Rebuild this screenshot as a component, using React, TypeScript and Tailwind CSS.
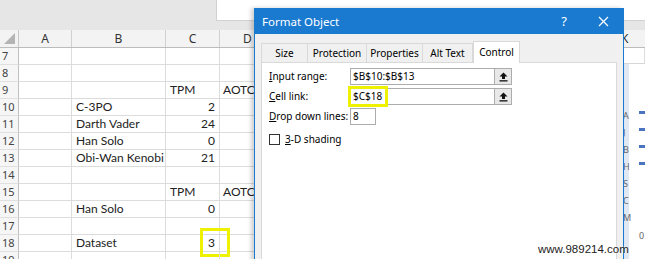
import React from "react";

type Row = { n: number; b?: string; c?: string; d?: string; num?: boolean; mark?: boolean };

const rows: Row[] = [
  { n: 7 },
  { n: 8 },
  { n: 9, c: "TPM", d: "AOTC" },
  { n: 10, b: "C-3PO", c: "2", num: true },
  { n: 11, b: "Darth Vader", c: "24", num: true },
  { n: 12, b: "Han Solo", c: "0", num: true },
  { n: 13, b: "Obi-Wan Kenobi", c: "21", num: true },
  { n: 14 },
  { n: 15, c: "TPM", d: "AOTC" },
  { n: 16, b: "Han Solo", c: "0", num: true },
  { n: 17 },
  { n: 18, b: "Dataset", c: "3", num: true, mark: true },
  { n: 19 },
];

const cell =
  "h-[17px] border-r border-b border-[#dcdcdc] px-[4px] font-['Lato',sans-serif] text-[12px] leading-[16px] text-[#222] whitespace-nowrap";

function UploadButton() {
  return (
    <div className="ml-auto flex h-full w-[17px] items-center justify-center border-l border-[#adadad] bg-[#e8e8e8]">
      <svg width="9" height="10" viewBox="0 0 9 10">
        <path d="M4.5 0.5 L8.5 4.5 L6 4.5 L6 7 L3 7 L3 4.5 L0.5 4.5 Z" fill="#111" />
        <rect x="0.5" y="8.2" width="8" height="1.3" fill="#111" />
      </svg>
    </div>
  );
}

function Tab({ label, w, active }: { label: string; w: string; active?: boolean }) {
  if (active) {
    return (
      <div className={`${w} -mb-px flex h-[22px] items-center justify-center border border-b-0 border-[#d9d9d9] bg-white`}>
        {label}
      </div>
    );
  }
  return (
    <div className={`${w} flex h-[19px] items-center justify-center border border-r-0 border-b-0 border-[#d9d9d9] bg-[#f0f0f0]`}>
      {label}
    </div>
  );
}

export default function App() {
  return (
    <div className="relative h-[259px] w-[645px] overflow-hidden bg-white font-['Noto_Sans',sans-serif]">
      {/* ribbon / formula area */}
      <div className="flex h-[30px] bg-[#e6e6e6]">
        <div className="ml-[216px] h-[21px] flex-1 border-b border-l border-[#d2d2d2] bg-white" />
      </div>

      {/* column headers */}
      <div className="flex h-[18px] border-b border-[#bcbcbc] bg-[#f3f3f3] text-[12px] leading-[17px] text-[#333]">
        <div className="flex w-[19px] items-end justify-end border-r border-[#c8c8c8] p-[3px]">
          <div className="h-0 w-0 border-b-[11px] border-l-[11px] border-b-[#b4b4b4] border-l-transparent" />
        </div>
        <div className="w-[53px] border-r border-[#d0d0d0] text-center">A</div>
        <div className="w-[94px] border-r border-[#d0d0d0] text-center">B</div>
        <div className="w-[54px] border-r border-[#d0d0d0] text-center">C</div>
        <div className="w-[56px] border-r border-[#d0d0d0] text-center">D</div>
        <div className="flex-1 pl-[345px]">K</div>
      </div>

      {/* sheet rows */}
      {rows.map((r) => (
        <div key={r.n} className="flex h-[17px]">
          <div className="h-[17px] w-[19px] border-r border-b border-r-[#c0c0c0] border-b-[#e0e0e0] bg-[#f6f6f6] pl-[2px] text-[11px] leading-[16px] text-[#444]">
            {r.n}
          </div>
          <div className={`${cell} w-[53px]`} />
          <div className={`${cell} w-[94px] overflow-hidden`}>{r.b}</div>
          <div className={`${cell} relative w-[54px] ${r.num ? "text-right" : "text-left"}`}>
            {r.c}
            {r.mark && (
              <div className="absolute left-[34px] top-[-7px] h-[29px] w-[30px] border-[3px] border-[#eef200]" />
            )}
          </div>
          <div className={`${cell} w-[56px] pl-[3px]`}>{r.d}</div>
          <div className={`${cell} flex-1`} />
        </div>
      ))}

      {/* chart peeking out on the right */}
      <div className="absolute left-[623px] top-[63px] flex h-[200px] w-[22px] border-t border-[#d6d6d6] bg-white">
        <div className="flex w-[6px] flex-col bg-[#dfe8f3] pt-[43px] text-[9px] leading-[17px] text-[#666]">
          <span>A</span>
          <span>J</span>
          <span>B</span>
          <span>H</span>
          <span>S</span>
          <span>C</span>
          <span>M</span>
        </div>
        <div className="flex flex-1 flex-col pl-[10px] pt-[47px]">
          <div className="mb-[14px] h-[3px] w-[6px] bg-[#4a74c0]" />
          <div className="mb-[14px] h-[3px] w-[6px] bg-[#4a74c0]" />
          <div className="mb-[14px] h-[3px] w-[6px] bg-[#4a74c0]" />
          <div className="h-[3px] w-[6px] bg-[#4a74c0]" />
          <div className="mt-[66px] text-[9px] leading-[10px] text-[#666]">0</div>
        </div>
      </div>

      {/* Format Object dialog */}
      <div className="absolute left-[254px] top-[8px] h-[260px] w-[370px] border border-[#1a7ad0] bg-[#f0f0f0] text-[10px] text-black shadow-[-3px_0_4px_rgba(0,0,0,0.18)]">
        <div className="flex h-[25px] items-center bg-[#1a7ad0] pl-[7px] text-[11.5px] text-white">
          <span>Format Object</span>
          <span className="ml-auto mr-[31px] text-[13px]">?</span>
          <svg width="11" height="11" viewBox="0 0 11 11" className="mr-[14px]">
            <path d="M1 1 L10 10 M10 1 L1 10" stroke="#fff" strokeWidth="1.2" />
          </svg>
        </div>

        <div className="px-[6px] pt-[6px]">
          <div className="flex h-[22px] items-end">
            <Tab label="Size" w="w-[46px]" />
            <Tab label="Protection" w="w-[59px]" />
            <Tab label="Properties" w="w-[56px]" />
            <div className="flex h-[19px] w-[51px] items-center justify-center border border-b-0 border-[#d9d9d9] bg-[#f0f0f0]">
              Alt Text
            </div>
            <Tab label="Control" w="w-[47px]" active />
          </div>

          <div className="h-[220px] w-[356px] border border-[#d9d9d9] bg-white pl-[7px] pt-[5px]">
            <div className="flex h-[17px] items-center">
              <span className="w-[81px]">
                <span className="underline">I</span>nput range:
              </span>
              <div className="flex h-[17px] w-[162px] items-center border border-[#acacac] pl-[2px]">
                <span>$B$10:$B$13</span>
                <UploadButton />
              </div>
            </div>
            <div className="mt-[3px] flex h-[17px] items-center">
              <span className="w-[81px]">
                <span className="underline">C</span>ell link:
              </span>
              <div className="relative flex h-[17px] w-[162px] items-center border border-[#acacac] pl-[2px]">
                <span>$C$18</span>
                <UploadButton />
                <div className="absolute left-[-3px] top-[-3px] h-[21px] w-[40px] border-[3px] border-[#eef200]" />
              </div>
            </div>
            <div className="mt-[3px] flex h-[17px] items-center">
              <span className="w-[81px]">
                <span className="underline">D</span>rop down lines:
              </span>
              <div className="flex h-[17px] w-[26px] items-center border border-[#acacac] pl-[2px]">8</div>
            </div>
            <div className="mt-[7px] flex items-center">
              <div className="h-[11px] w-[11px] border border-[#333] bg-white" />
              <span className="ml-[5px]">
                <span className="underline">3</span>-D shading
              </span>
            </div>
          </div>
        </div>
      </div>

      {/* watermark */}
      <div className="absolute left-[538px] top-[243px] font-['Liberation_Sans',sans-serif] text-[11.5px] leading-[13px] text-[#222] [text-shadow:0_0_2px_#fff]">
        www.989214.com
      </div>
    </div>
  );
}
